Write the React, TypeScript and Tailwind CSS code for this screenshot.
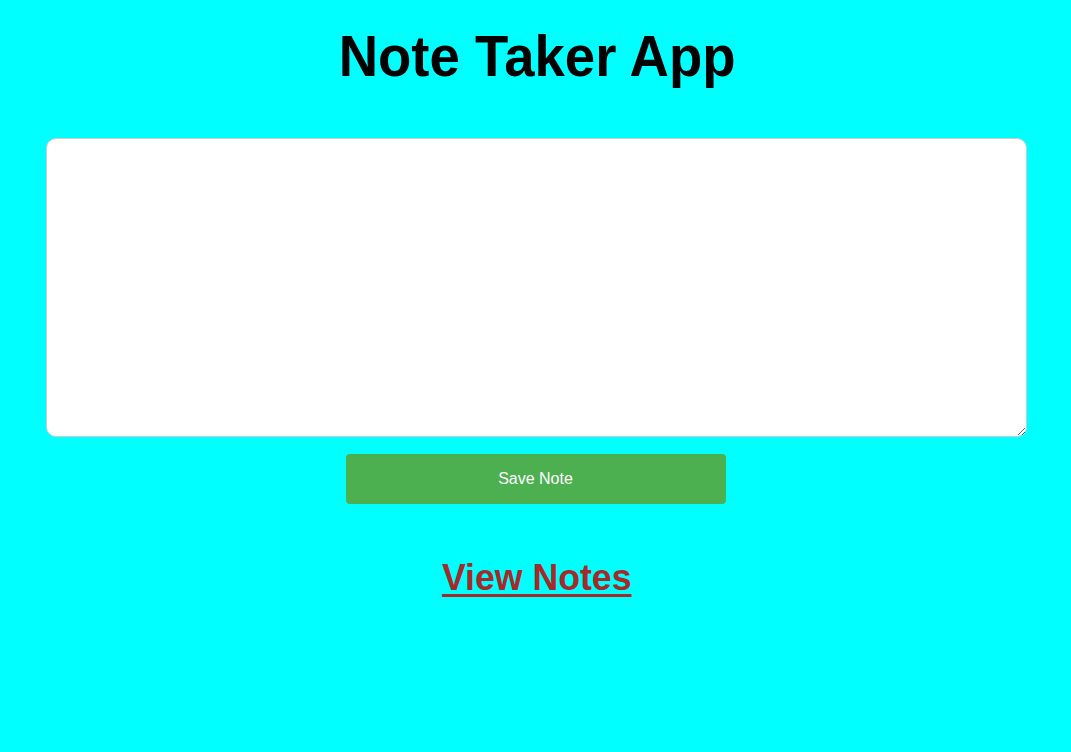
export default function App() {
  return (
    <div className="min-h-[752px] bg-[#00ffff] flex flex-col items-center font-['Liberation_Sans',Arial,sans-serif]">
      <h1 className="mt-[22px] ml-[3px] text-[58px] leading-[68px] font-bold text-black scale-x-[0.94]">
        Note Taker App
      </h1>
      <textarea className="mt-[48px] self-start ml-[46px] w-[981px] h-[299px] bg-white border border-[#cccccc] rounded-[10px] p-2 outline-none" />
      <button className="mt-[17px] w-[380px] h-[50px] bg-[#4caf50] text-white text-[16px] rounded-[4px]">
        Save Note
      </button>
      <a
        href="#"
        className="mt-[52px] ml-[2px] text-[36px] leading-[44px] font-bold text-[#a52a2a] underline decoration-[3px] underline-offset-[4px] scale-x-[0.99]"
      >
        View Notes
      </a>
    </div>
  );
}
